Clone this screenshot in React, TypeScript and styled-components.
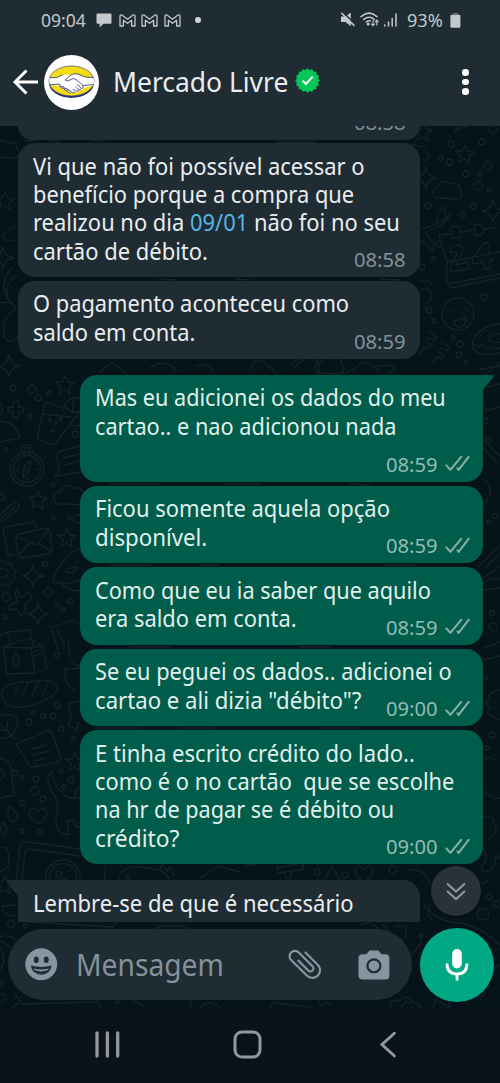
import React from "react";
import styled, { createGlobalStyle } from "styled-components";

const Global = createGlobalStyle`
  html, body { margin: 0; padding: 0; background: #0b141a; }
  * { box-sizing: border-box; }
`;

const Screen = styled.div`
  position: relative;
  width: 500px;
  height: 1083px;
  display: flex;
  flex-direction: column;
  overflow: hidden;
  background: #0a131a;
  color: #e9edef;
  font-family: "Noto Sans", "Open Sans", sans-serif;
`;

const Condensed = styled.span<{ $x: number }>`
  display: block;
  width: max-content;
  white-space: pre;
  transform: scaleX(${(p) => p.$x});
  transform-origin: left center;
`;

const Top = styled.header`
  flex: none;
  height: 126px;
  background: #202c33;
  position: relative;
`;

const StatusBar = styled.div`
  height: 40px;
  display: flex;
  justify-content: space-between;
  padding: 0 39px 0 41px;
  color: #c3c8cb;
  font-size: 18.5px;
  line-height: 40px;
`;

const StatusGroup = styled.div`
  display: flex;
  align-items: center;
`;

const StatusText = styled.div<{ $w: number }>`
  width: ${(p) => p.$w}px;
`;

const BubbleIcon = styled.svg`
  margin-right: 7px;
`;

const MailIcon = styled.svg`
  margin-right: 5.6px;
`;

const NoticeDot = styled.span`
  width: 6.5px;
  height: 6.5px;
  margin-left: 8.4px;
  border-radius: 50%;
  background: #d2d5d7;
`;

const TitleBar = styled.div`
  height: 84px;
  display: flex;
  align-items: center;
  padding-left: 12px;
`;

const Avatar = styled.div`
  width: 55px;
  height: 55px;
  margin-left: 5px;
  border-radius: 50%;
  background: #fff;
  display: grid;
  place-items: center;
`;

const Title = styled.h1`
  margin: 0 0 2px 14px;
  width: 182px;
  font-size: 28px;
  line-height: 40px;
  font-weight: 400;
`;

const Verified = styled.svg`
  margin-bottom: 3px;
`;

const Menu = styled.div`
  margin-left: auto;
  width: 69px;
  display: flex;
  flex-direction: column;
  align-items: center;
  gap: 2.8px;
`;

const MenuDot = styled.span`
  width: 6.6px;
  height: 6.6px;
  border-radius: 50%;
  background: #fff;
`;

const Body = styled.main`
  position: relative;
  height: 882px;
  flex: none;
  display: flex;
  flex-direction: column;
  background: #07131a;
`;

const Wallpaper = styled.svg`
  position: absolute;
  inset: 0;
`;

const Thread = styled.div`
  position: relative;
  height: 796px;
  flex: none;
  overflow: hidden;
  display: flex;
  flex-direction: column;
  padding: 0 17.5px;
`;

const Bubble = styled.div<{ $out?: boolean; $h: number; $gap?: number; $tail?: boolean; $cut?: boolean }>`
  position: relative;
  flex: none;
  display: grid;
  grid-template: minmax(0, 1fr) / minmax(0, 1fr);
  width: 402.6px;
  height: ${(p) => p.$h}px;
  margin-top: ${(p) => p.$gap ?? 3.8}px;
  align-self: ${(p) => (p.$out ? "flex-end" : "flex-start")};
  padding: ${(p) => (p.$cut ? 0 : 8.6)}px 13px 3px 15.2px;
  border-radius: ${(p) =>
    p.$cut ? "0 0 17px 17px" : p.$tail ? (p.$out ? "17px 0 17px 17px" : "0 17px 17px 17px") : "17px"};
  background: ${(p) => (p.$out ? "#005c4b" : "#202c33")};
  color: ${(p) => (p.$out ? "#e0f0ec" : "#e9edef")};
`;

const Tail = styled.svg<{ $out?: boolean }>`
  position: absolute;
  top: 0;
  ${(p) => (p.$out ? "left: 402px;" : "right: 402px; transform: scaleX(-1);")}
`;

const Words = styled.div`
  grid-area: 1 / 1;
  font-size: 24.2px;
  line-height: 28.3px;
`;

const DateLink = styled.span`
  color: #53b5e6;
`;

const Meta = styled.div<{ $out?: boolean }>`
  grid-area: 1 / 1;
  align-self: end;
  justify-self: end;
  display: flex;
  align-items: center;
  gap: 6px;
  height: 30px;
  font-size: 20.3px;
  line-height: 30px;
  color: ${(p) => (p.$out ? "#93bbb2" : "#83919a")};
`;

const Stamp = styled.div`
  width: 53px;
`;

const ScrollDown = styled.button`
  position: absolute;
  left: 431px;
  top: 740px;
  width: 50px;
  height: 50px;
  padding: 0;
  border: 0;
  border-radius: 50%;
  background: #283238;
  box-shadow: 0 1px 2px rgba(0, 0, 0, 0.35);
  display: grid;
  place-items: center;
`;

const Composer = styled.div`
  position: relative;
  display: flex;
  align-items: center;
  gap: 8px;
  padding: 6px 6px 0 8px;
`;

const Field = styled.div`
  width: 404px;
  height: 71px;
  border-radius: 36px;
  background: #202c33;
  display: flex;
  align-items: center;
  padding: 0 22px 0 17px;
  color: #83929b;
`;

const Placeholder = styled.div`
  width: 213px;
  margin-left: 18px;
  font-size: 30px;
  line-height: 44px;
  padding-top: 1px;
`;

const ClipIcon = styled.svg`
  margin-right: 37px;
`;

const Mic = styled.button`
  width: 73.5px;
  height: 73.5px;
  padding: 0;
  border: 0;
  border-radius: 50%;
  background: #00a884;
  display: grid;
  place-items: center;
`;

const NavBar = styled.nav`
  flex: 1;
  display: grid;
  grid-template-columns: 140px 146px 18px;
  align-items: start;
  padding: 22px 0 0 93px;
`;

const Ticks = () => (
  <svg width="25" height="17" viewBox="0 0 25 17" fill="none" stroke="#86ada6" strokeWidth="2.1" strokeLinecap="round" strokeLinejoin="round">
    <path d="M1.3 10.4 5.4 14.8 16.2 1.8" />
    <path d="M12.5 13.4 13.6 14.8 23.6 1.8" />
  </svg>
);

const Time = ({ value, out }: { value: string; out?: boolean }) => (
  <Meta $out={out}>
    <Stamp>
      <Condensed $x={0.995}>{value}</Condensed>
    </Stamp>
    {out && <Ticks />}
  </Meta>
);

type MsgProps = {
  lines: { x: number; t: React.ReactNode }[];
  time: string;
  h: number;
  out?: boolean;
  gap?: number;
  tail?: boolean;
};

const Message = ({ lines, time, h, out, gap, tail }: MsgProps) => (
  <Bubble $out={out} $h={h} $gap={gap} $tail={tail}>
    {tail && (
      <Tail $out={out} width="12" height="17" viewBox="0 0 12 17" fill={out ? "#005c4b" : "#202c33"}>
        <path d="M0 0H9.7Q12.2.3 10.8 3L0 16Z" />
      </Tail>
    )}
    <Words>
      {lines.map((l, i) => (
        <Condensed key={i} $x={l.x}>
          {l.t}
        </Condensed>
      ))}
    </Words>
    {time && <Time value={time} out={out} />}
  </Bubble>
);

const STAR = "M0-9 3-3 9-2 4 2 5 9 0 5-6 8-4 2-9-3-3-3Z";
const SPARK = "M0-11Q1-2 11 0 2 1 0 11-1 2-11 0-2-1 0-11Z";
const CLOUD = "M-12 7Q-19-1-9-4-5-13 3-7 12-9 12-1 17 5 10 8Z";
const HEART = "M0 9C-16 0-7-12 0-4 7-12 16 0 0 9Z";

const stars: [number, number][] = [[465, 154], [65, 385], [38, 500], [67, 538], [5, 201], [423, 132], [75, 762], [5, 885]];
const sparks: [number, number][] = [[426, 178], [493, 211], [9, 366], [33, 576], [38, 614], [3, 258]];
const clouds: [number, number, number][] = [[5, 150, 1], [448, 191, 1], [416, 153, 0.9], [70, 496, 1.1], [15, 235, 0.8], [330, 366, 1]];
const rings: [number, number, number][] = [
  [451, 144, 3], [482, 142, 3], [493, 129, 4], [441, 158, 2.5], [450, 162, 3], [488, 166, 4], [466, 174, 3], [480, 174, 2],
  [478, 186, 4], [489, 190, 2], [428, 206, 3], [463, 215, 2.5], [473, 206, 3], [439, 244, 3], [433, 259, 2], [422, 267, 3],
  [484, 297, 3], [429, 310, 3], [434, 321, 2], [453, 338, 2], [460, 344, 3], [459, 355, 3], [466, 362, 2], [13, 388, 3],
  [32, 389, 4], [38, 398, 3], [49, 393, 2], [30, 416, 2], [75, 434, 3], [6, 450, 2], [53, 485, 2], [2, 497, 3], [53, 518, 2],
  [69, 518, 2], [78, 519, 4], [45, 564, 2.5], [48, 592, 4], [6, 597, 4], [57, 605, 2], [63, 610, 2], [70, 601, 2.5], [5, 617, 2],
  [57, 655, 2.5], [57, 705, 3], [29, 722, 3], [43, 716, 2.5], [53, 716, 3], [33, 713, 2], [61, 729, 2.5], [73, 739, 2],
  [15, 773, 3], [22, 777, 2], [36, 779, 3], [35, 791, 4], [22, 803, 2.5], [43, 799, 3], [61, 771, 2], [71, 780, 3], [64, 787, 2],
  [22, 831, 2], [40, 832, 3], [485, 421, 3], [488, 440, 3], [495, 516, 2.5], [489, 522, 2], [492, 613, 2.5], [493, 627, 4],
  [486, 678, 2], [492, 735, 3], [487, 748, 2], [393, 870, 4], [317, 872, 3], [345, 875, 3], [11, 924, 3.5], [25, 926, 2],
  [483, 914, 6], [489, 897, 3], [496, 904, 3], [2, 998, 4], [117, 1001, 2], [421, 936, 2], [2, 984, 2],
];

const Doodles = () => (
  <Wallpaper width="500" height="882" viewBox="0 126 500 882" fill="none" stroke="#14232a" strokeWidth="1.3" strokeLinecap="round" strokeLinejoin="round">
    {stars.map(([x, y]) => <path key={`s${x}-${y}`} transform={`translate(${x} ${y})`} d={STAR} />)}
    {sparks.map(([x, y]) => <path key={`p${x}-${y}`} transform={`translate(${x} ${y})`} d={SPARK} />)}
    {clouds.map(([x, y, s]) => <path key={`c${x}-${y}`} transform={`translate(${x} ${y}) scale(${s})`} d={CLOUD} />)}
    {rings.map(([x, y, r]) => <circle key={`r${x}-${y}`} cx={x} cy={y} r={r} />)}
    <path transform="translate(38 815)" d={HEART} />
    <path transform="translate(364 873)" d={HEART} />
    {/* paper plane and calendar */}
    <path d="M454 132 475 122M454 132 460 124" />
    <path d="M422 229Q440 224 450 214 447 222 439 226L426 232 434 245 433 251 421 240M438 226Q434 215 443 207 448 214 443 222" />
    <path d="M439 235 450 234M462 232 472 230M484 229 494 228M439 235 447 262V282L450 288 500 278M447 262 500 252M448 284 500 274" />
    <path d="M451 229Q451 226 455 226T460 229L461 235Q459 239 453 238ZM474 226Q477 222 482 226L484 232Q480 237 475 235Z" />
    <path d="M450 252Q450 244 458 245 466 247 461 255L456 265 468 262 469 269 451 272Q448 268 453 262L458 253ZM484 243 472 259 473 264 484 262V269H490V260L494 259M484 243H489V254" />
    {/* smiling face with hearts */}
    <circle cx="458" cy="314" r="16" />
    <path transform="translate(450 313) scale(.5)" d={HEART} />
    <path transform="translate(464 311) scale(.5)" d={HEART} />
    <path d="M453 321Q461 320 466 317 467 325 461 327 455 327 453 321Z" />
    {/* doughnut */}
    <path d="M500 324Q474 327 472 346 475 358 500 353M500 334Q489 333 489 339 493 344 500 342M472 343Q478 349 482 344 487 352 491 346 496 351 500 347M479 338 481 335M485 331 488 330" />
    <path d="M419 291Q429 284 431 294 434 300 424 304M419 282Q428 277 432 285M428 332 437 336 434 340 428 338 426 342 431 345 429 349 424 347 419 356M441 342 449 347 447 351 441 348 439 352 444 355 441 359 437 357 431 366" />
    <path d="M250 370Q256 355 266 364L277 374M290 366Q300 353 315 360 322 364 318 374M345 374 365 362 380 370M378 366 394 365Q396 370 388 374M484 376 500 362M480 369 500 366M294 368 306 357" />
    <path d="M12 268Q-5 286 13 305M18 275Q4 282 8 297M0 303Q14 300 16 310M16 310Q1 316 4 336 9 346 18 337M100 372 112 362 127 374M150 368Q165 357 177 371M195 366Q206 361 214 371" />
    {/* drink */}
    <path d="M45 402 79 413 54 445 37 439ZM43 414 71 417M63 410A12 14 0 1 1 69 424M73 413V400M73 413 84 409M73 413 64 405" />
    <circle cx="50" cy="420" r="1.5" /><circle cx="56" cy="423" r="1.5" /><circle cx="61" cy="419" r="1.5" /><circle cx="53" cy="431" r="1.5" />
    <path d="M13 402 18 401 19 407 24 408 23 412 18 413 17 418 13 417 13 412 8 411 8 407 13 407Z" />
    <path d="M0 421Q16 422 20 438L0 442M0 403Q5 408 0 416" />
    {/* compass */}
    <circle cx="27" cy="469" r="17" /><circle cx="27" cy="469" r="13.5" /><circle cx="27" cy="450" r="5.5" /><circle cx="27" cy="450" r="2.5" />
    <path d="M31 461 29 472 23 477 24 466ZM24 466 29 472M16 469H18M36 469H38M27 479V481" />
    {/* note, clip, envelopes */}
    <path d="M80 446 60 451Q55 453 58 461L59 468 55 476 64 475 80 472M64 458 80 454M65 465 80 461M0 514 15 502Q21 504 18 509L0 523M0 519 14 508" />
    <path d="M14 555 8 555 3 530 5 527 34 522 37 528M16 538Q15 535 20 534L46 528Q49 528 50 532L52 549Q52 553 47 554L22 558Q19 558 18 554ZM17 537 37 545 48 529M18 556 30 543M51 551 39 544" />
    {/* gear, rocket, bow */}
    <circle cx="3" cy="573" r="5" />
    <path d="M0 561 4 561 6 564 11 563 12 568 16 571 14 575 15 579 11 581 9 586 5 584 0 586M80 548Q62 556 53 580 61 587 80 580M66 572Q65 568 77 567 79 571 70 573ZM62 583Q64 590 80 591" />
    <path d="M17 590 21 598 29 592 32 599 24 604 26 611 21 617 17 609 9 610 11 604 18 602 15 593Z" />
    <path d="M8 632 30 630 33 645M0 635 7 632 11 645M51 627 75 620 80 625M51 627 58 650M58 630 65 646" />
    {/* milk carton */}
    <path d="M3 647 28 638 42 645 47 668 35 673 7 674ZM3 647 31 648 35 673M31 648 42 645M34 652 41 649M35 656 42 653M16 654Q8 664 16 666 23 663 16 654Z" />
    <path d="M68 640 70 658Q71 664 80 666M66 668Q62 685 75 690M64 670 80 668" />
    {/* bread, leaf, speech */}
    <path d="M2 697Q-2 682 30 682 58 677 57 690 51 702 22 707 5 709 2 697ZM13 697 18 686M22 697 28 683M32 695 39 681M43 694 48 682" />
    <path d="M0 715Q17 712 18 723 14 740 0 738M0 724 16 740M7 730 8 719M7 730 0 730M68 703 80 701M68 703 71 719 68 724 78 731 77 723 80 722" />
    <path d="M16 744 48 731Q52 731 53 735L61 758Q60 763 54 763L33 767Q28 766 26 760ZM31 749 47 745M32 755 49 751M34 761 46 758" />
    <path d="M0 758Q10 760 11 769L14 795 0 798M0 769Q8 775 0 780M10 806Q5 817 12 822 24 819 10 806ZM3 822Q-2 831 3 835 10 831 3 822Z" />
    {/* dinosaur */}
    <path d="M53 770Q44 776 51 791 60 800 57 812 54 829 62 834H69L67 821 74 820 76 827H80M51 770Q54 790 69 798L80 798M80 787Q74 790 75 798" />
    {/* video screen */}
    <path d="M16 880 20 846Q21 841 27 842L80 849M22 880 25 852Q26 848 30 849L80 856M104 880 106 866" />
    <circle cx="63" cy="877" r="17" /><circle cx="63" cy="877" r="13.5" />
    <path d="M57 871Q54 875 59 880 65 886 69 882L66 879 63 880 60 876 62 873Z" />
    <path d="M0 848Q8 844 9 858L8 867 0 872M118 880Q121 866 140 867L160 870 170 878M160 870 162 865 167 871 170 867 174 876M200 878 218 866 240 872" />
    <circle cx="128" cy="877" r="2" />
    <path d="M277 868 302 863 304 869 278 873ZM284 872 287 878M293 870 290 878M325 880 332 866 340 880M245 866 258 864" />
    {/* right edge */}
    <path d="M484 378 495 374M483 392Q482 409 488 410L500 407M487 387 500 384M482 447 497 463M487 443 500 456M484 479Q495 489 487 499L484 510M478 567 500 545M485 568 500 553M483 578 500 566M483 583 492 578 500 579M483 590 500 588" />
    <path d="M483 648 500 642M483 660 500 656M500 690Q485 693 490 700 483 704 491 708 484 714 493 716L500 720M483 760Q490 755 496 761M484 790Q491 800 500 798M483 817Q494 813 494 824 500 831 489 839M480 844Q488 852 485 862 478 867 484 872 496 870 496 855" />
    <path d="M410 870Q425 868 430 884M424 905Q437 922 460 923 480 926 500 945M430 905Q425 916 433 920M470 880Q483 887 488 880M495 860 500 856M493 970 500 964M480 1000 492 975" />
    {/* behind the composer */}
    <path d="M0 937Q10 934 16 940M0 941Q14 946 15 956M0 948Q8 960 0 970M2 906 17 905M2 906Q2 916 17 916M30 922 112 927 117 922M150 930Q170 922 190 929M360 925Q368 920 378 928M382 924 390 932M395 927Q410 922 405 938M409 955Q425 945 420 935" />
    <path d="M12 1008 20 1001 15 994M20 1004 98 1002 102 1008M130 998 143 1006M190 1008 192 1001M200 1008Q208 998 221 1008M318 1001 322 1007 326 1001 331 1006M270 1008Q272 999 282 1004L310 1007M390 1008 392 1001 401 1000 404 997 411 999 414 1003 420 1005V1008M433 1008 436 999 449 1008V998" />
    <circle cx="407" cy="1007" r="5" />
    {/* glimpses between bubbles */}
    <path d="M25 141 34 141M50 141 60 142M90 142Q97 139 105 142M276 142H315M160 279 175 280M235 279 250 280M380 279 400 280M110 484H160M225 484H260M350 484 370 485M110 565H150M200 565H220M385 565H415M130 647H170M300 647H330M95 728H140M180 728H215M320 728H360" />
  </Wallpaper>
);

const Handshake = () => (
  <svg width="47" height="34" viewBox="0 0 47 34">
    <ellipse cx="23.5" cy="18" rx="22.5" ry="15" fill="#2d3277" />
    <ellipse cx="23.5" cy="16" rx="22.5" ry="15" fill="#f5dc14" stroke="#4a4b62" strokeWidth=".7" />
    <path d="M1.6 12.5Q8 14 14.7 9.8 18 8.8 22 10.3L27 8.3Q32 10.5 36 12 41 13.4 45.3 12.5 47 17 45 20.5L35.5 23Q34.5 26 31.5 25.5 30 28 27 27 25 29.3 22.5 27.2 19.5 28 19 25 16 25.5 15.6 23 12 24 11.4 21L2 20Q.7 16 1.6 12.5Z" fill="#fff" />
    <path d="M2 12.7Q9 14 14.7 9.8M45 12.5Q38 13.5 30 9 26 7.8 23 10L17 15Q19 17 22 15L25.5 13.5Q28 14 35 20.5 36 23 33.5 23.5L29 19.5M33.5 23.5Q32 26.5 27.5 22M31 25Q29.5 28 25 24M27 27Q25 29 22.5 26.5 22 24 20 25.3 19.5 22.5 16.8 23.3 16 20.7 13.5 21.8 11 21 12 19.2L2 19.7M11.5 21Q13 24 16 23 16 26 19 25.3 19.5 28.5 22.5 27M35 20.5 45 19.5" fill="none" stroke="#434678" strokeWidth=".9" strokeLinejoin="round" />
  </svg>
);

const GmailMark = () => (
  <MailIcon width="17" height="13" viewBox="0 0 17 13" fill="none" stroke="#c3c8cb" strokeWidth="1.3" strokeLinejoin="round">
    <path d="M1 12V2.2Q1 .4 3 1L8.5 5.2 14 1Q16 .4 16 2.2V12H12.6V6.3L8.5 9.3 4.4 6.3V12Z" />
  </MailIcon>
);

const BADGE = Array.from({ length: 32 }, (_, i) => {
  const r = i % 2 ? 10.8 : 12.3;
  const a = (i * Math.PI) / 16;
  return `${(12.5 + r * Math.sin(a)).toFixed(2)},${(12.5 - r * Math.cos(a)).toFixed(2)}`;
}).join(" ");

export default function App() {
  return (
    <Screen>
      <Global />
      <Top>
        <StatusBar>
          <StatusGroup>
            <StatusText $w={54.5}>
              <Condensed $x={0.95}>09:04</Condensed>
            </StatusText>
            <BubbleIcon width="16" height="15" viewBox="0 0 16 15" fill="#c3c8cb">
              <path d="M1.5.5h13q1 0 1 1v8.3q0 1-1 1H7.5L3.6 14.6V10.8H1.5q-1 0-1-1V1.5q0-1 1-1Z" />
            </BubbleIcon>
            <GmailMark />
            <GmailMark />
            <GmailMark />
            <NoticeDot />
          </StatusGroup>
          <StatusGroup>
            <svg width="67" height="18" viewBox="340 11 67 18" fill="none" stroke="#c3c8cb" strokeWidth="1.5" strokeLinecap="round">
              <path d="M341 16.5H345.5L350.8 12.6V26.2L345.5 22H341Z" fill="#c3c8cb" stroke="none" />
              <path d="M342.8 12 355.8 24.7" stroke="#202c33" strokeWidth="1.5" />
              <path d="M341.8 13.4 354 25.4" />
              <path d="M361 16.6Q369 9.6 377 16.6M363.6 19.5Q369 15 374.4 19.5M366.2 22Q369 20 370.5 21" />
              <circle cx="368.2" cy="24" r=".8" fill="#c3c8cb" />
              <path d="M373 20.5V25.5M371.5 24 373 25.7 374.5 24M376.8 25V20.2M375.3 21.8 376.8 20 378.3 21.8" strokeWidth="1.1" />
              <path d="M384.8 25V26M388.5 22V26M392.2 18.5V26M396 14V26" />
            </svg>
            <StatusText $w={43}>
              <Condensed $x={0.98}>93%</Condensed>
            </StatusText>
            <svg width="11" height="15" viewBox="0 0 11 15" fill="#c3c8cb">
              <path d="M3 0H8V1.5H3Z" opacity=".5" />
              <rect x=".4" y="1.8" width="10" height="13" rx="1.2" />
            </svg>
          </StatusGroup>
        </StatusBar>
        <TitleBar>
          <svg width="27" height="26" viewBox="0 0 27 26" fill="none" stroke="#fff" strokeWidth="2.9">
            <path d="M26 13H3M14.5 1.5 3 13 14.5 24.5" />
          </svg>
          <Avatar>
            <Handshake />
          </Avatar>
          <Title>
            <Condensed $x={0.944}>Mercado Livre</Condensed>
          </Title>
          <Verified width="25" height="25" viewBox="0 0 25 25">
            <polygon points={BADGE} fill="#05c656" />
            <path d="M7.6 12.6 11 16 17.6 8.6" fill="none" stroke="#fff" strokeWidth="2" />
          </Verified>
          <Menu>
            <MenuDot />
            <MenuDot />
            <MenuDot />
          </Menu>
        </TitleBar>
      </Top>
      <Body>
        <Doodles />
        <Thread>
          <Bubble $h={13.5} $gap={0} $cut>
            <Time value="08:58" />
          </Bubble>
          <Message
            h={133.8}
            time="08:58"
            lines={[
              { x: 0.907, t: "Vi que não foi possível acessar o" },
              { x: 0.903, t: "benefício porque a compra que" },
              { x: 0.906, t: <>realizou no dia <DateLink>09/01</DateLink> não foi no seu</> },
              { x: 0.908, t: "cartão de débito." },
            ]}
          />
          <Message
            h={78}
            time="08:59"
            lines={[
              { x: 0.903, t: "O pagamento aconteceu como" },
              { x: 0.903, t: "saldo em conta." },
            ]}
          />
          <Message
            out
            tail
            gap={15.8}
            h={107.2}
            time="08:59"
            lines={[
              { x: 0.895, t: "Mas eu adicionei os dados do meu" },
              { x: 0.898, t: "cartao.. e nao adicionou nada" },
            ]}
          />
          <Message
            out
            h={77.7}
            time="08:59"
            lines={[
              { x: 0.908, t: "Ficou somente aquela opção" },
              { x: 0.92, t: "disponível." },
            ]}
          />
          <Message
            out
            h={77.7}
            time="08:59"
            lines={[
              { x: 0.897, t: "Como que eu ia saber que aquilo" },
              { x: 0.905, t: "era saldo em conta." },
            ]}
          />
          <Message
            out
            h={77.7}
            time="09:00"
            lines={[
              { x: 0.899, t: "Se eu peguei os dados.. adicionei o" },
              { x: 0.916, t: 'cartao e ali dizia "débito"?' },
            ]}
          />
          <Message
            out
            h={134}
            time="09:00"
            lines={[
              { x: 0.912, t: "E tinha escrito crédito do lado.." },
              { x: 0.901, t: "como é o no cartão  que se escolhe" },
              { x: 0.895, t: "na hr de pagar se é débito ou" },
              { x: 0.94, t: "crédito?" },
            ]}
          />
          <Message tail gap={15.8} h={78} time="" lines={[{ x: 0.91, t: "Lembre-se de que é necessário" }]} />
        </Thread>
        <ScrollDown aria-label="Rolar">
          <svg width="22" height="20" viewBox="0 0 22 20" fill="none" stroke="#8998a2" strokeWidth="2.2">
            <path d="M2 2.5 11 10.5 20 2.5M2 10 11 18 20 10" />
          </svg>
        </ScrollDown>
        <Composer>
          <Field>
            <svg width="33" height="33" viewBox="0 0 33 33">
              <circle cx="16.3" cy="16.3" r="16" fill="#8696a0" />
              <ellipse cx="11.3" cy="11.7" rx="2.5" ry="3.3" fill="#202c33" />
              <ellipse cx="21.3" cy="11.7" rx="2.5" ry="3.3" fill="#202c33" />
              <path d="M5.8 17.6Q16.3 20.2 26.8 17.6 25 26.8 16.3 26.8T5.8 17.6Z" fill="#202c33" />
              <path d="M8.4 20.6Q16.3 22.4 24.2 20.6 22.8 23.4 16.3 23.4T8.4 20.6Z" fill="#8696a0" />
            </svg>
            <Placeholder>
              <Condensed $x={0.94}>Mensagem</Condensed>
            </Placeholder>
            <ClipIcon width="33" height="31" viewBox="288 949 33 31" fill="none" stroke="#8696a0" strokeWidth="2.2" strokeLinecap="round">
              <path d="M305.5 952.5 317.8 964.8A7.5 7.5 0 0 1 307.2 975.8L291.3 960.2A5.3 5.3 0 0 1 298.8 952.4L312.6 966.2A3 3 0 0 1 308.3 970.5L298.4 960.6" />
            </ClipIcon>
            <svg width="32" height="30" viewBox="0 0 32 30">
              <path d="M11.5.5H20.5L23.7 4.2H27.5Q31.5 4.2 31.5 8.2V25.5Q31.5 29.5 27.5 29.5H4.5Q.5 29.5.5 25.5V8.2Q.5 4.2 4.5 4.2H8.3Z" fill="#8696a0" />
              <circle cx="16" cy="15.8" r="6.5" fill="none" stroke="#202c33" strokeWidth="2.2" />
            </svg>
          </Field>
          <Mic aria-label="Gravar">
            <svg width="26" height="34" viewBox="0 0 26 34" fill="none">
              <rect x="8.2" y="1" width="9.6" height="19.4" rx="4.8" fill="#fff" />
              <path d="M3 15.5Q3 26 13 26T23 15.5M13 26V32.5" stroke="#fff" strokeWidth="2.8" />
            </svg>
          </Mic>
        </Composer>
      </Body>
      <NavBar>
        <svg width="29" height="29" viewBox="0 0 29 29" stroke="#94989b" strokeWidth="3.3" strokeLinecap="round">
          <path d="M4 3V26M14.4 3V26M24.7 3V26" />
        </svg>
        <svg width="29" height="29" viewBox="0 0 29 29" fill="none" stroke="#94989b" strokeWidth="3">
          <rect x="2" y="2" width="25" height="25" rx="7" />
        </svg>
        <svg width="18" height="29" viewBox="0 0 18 29" fill="none" stroke="#94989b" strokeWidth="2.9" strokeLinecap="round" strokeLinejoin="miter">
          <path d="M15.4 3.2 3 14.5 15.4 26" />
        </svg>
      </NavBar>
    </Screen>
  );
}
